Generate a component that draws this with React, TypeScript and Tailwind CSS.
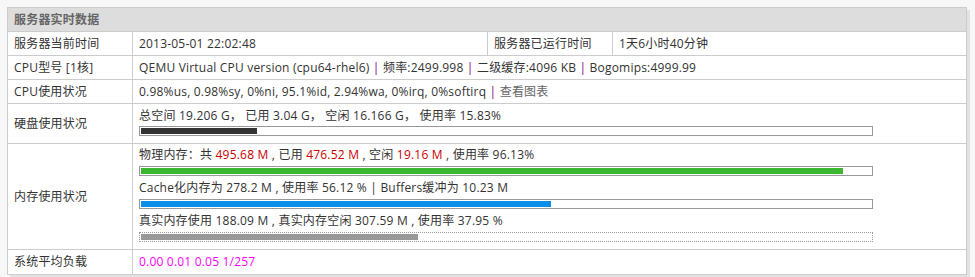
import React from "react";

const font = { fontFamily: '"Open Sans", "Noto Sans CJK SC", sans-serif' };

function Bar({ pct, color, dotted = false }: { pct: number; color: string; dotted?: boolean }) {
  return (
    <div
      className={`w-[734px] h-[10px] border border-[#999] p-[1px] bg-white ${dotted ? "border-dotted" : ""}`}
    >
      <div className={`h-full ${color}`} style={{ width: `${pct}%` }} />
    </div>
  );
}

function Row({
  label,
  className = "h-[24px]",
  children,
  last = false,
}: {
  label: string;
  className?: string;
  children: React.ReactNode;
  last?: boolean;
}) {
  return (
    <div className={`flex ${className} ${last ? "" : "border-b border-[#ccc]"}`}>
      <div className="w-[125px] shrink-0 border-r border-[#ccc] px-[6px] flex items-center">{label}</div>
      <div className="flex-1 px-[6px]">{children}</div>
    </div>
  );
}

const Sep = () => <span className="text-[#800080]">|</span>;
const Red = ({ children }: { children: React.ReactNode }) => <span className="text-[#cc0000]">{children}</span>;

export default function App() {
  return (
    <div
      className="bg-[#f7f7f7] w-[975px] h-[277px] pt-[7px] pl-[7px] text-[12px] text-[#333] tracking-[0.2px]"
      style={font}
    >
      <div className="w-[960px] bg-white border border-[#ccc] shadow-[3px_3px_0_#e2e2e2] leading-[18px]">
        <div className="h-[24px] bg-[#ddd] border-b border-[#ccc] px-[6px] flex items-center font-bold text-[#666]">
          服务器实时数据
        </div>

        {/* 时间 */}
        <div className="flex h-[24px] border-b border-[#ccc]">
          <div className="w-[125px] shrink-0 border-r border-[#ccc] px-[6px] flex items-center">服务器当前时间</div>
          <div className="w-[355px] shrink-0 border-r border-[#ccc] px-[6px] flex items-center">2013-05-01 22:02:48</div>
          <div className="w-[125px] shrink-0 border-r border-[#ccc] px-[6px] flex items-center">服务器已运行时间</div>
          <div className="flex-1 px-[6px] flex items-center">1天6小时40分钟</div>
        </div>

        <Row label="CPU型号 [1核]">
          <div className="h-full flex items-center">
            <span>
              QEMU Virtual CPU version (cpu64-rhel6) <Sep /> 频率:2499.998 <Sep /> 二级缓存:4096 KB <Sep />{" "}
              Bogomips:4999.99
            </span>
          </div>
        </Row>

        <Row label="CPU使用状况">
          <div className="h-full flex items-center">
            <span>
              0.98%us, 0.98%sy, 0%ni, 95.1%id, 2.94%wa, 0%irq, 0%softirq <Sep />{" "}
              <span className="text-[#666]">查看图表</span>
            </span>
          </div>
        </Row>

        <Row label="硬盘使用状况" className="h-[40px]">
          <div className="pt-[3px]">
            <div>总空间 19.206 G， 已用 3.04 G， 空闲 16.166 G， 使用率 15.83%</div>
            <div className="mt-[1px]">
              <Bar pct={15.83} color="bg-[#333]" />
            </div>
          </div>
        </Row>

        <Row label="内存使用状况" className="h-[106px]">
          <div className="pt-[2px] flex flex-col gap-[3px]">
            <div>
              <div>
                物理内存：共 <Red>495.68 M</Red> , 已用 <Red>476.52 M</Red> , 空闲 <Red>19.16 M</Red> , 使用率 96.13%
              </div>
              <div className="mt-[2px]">
                <Bar pct={96.13} color="bg-[#3cb531]" />
              </div>
            </div>
            <div>
              <div>Cache化内存为 278.2 M , 使用率 56.12 % | Buffers缓冲为 10.23 M</div>
              <div className="mt-[2px]">
                <Bar pct={56.12} color="bg-[#0b8fe8]" />
              </div>
            </div>
            <div>
              <div>真实内存使用 188.09 M , 真实内存空闲 307.59 M , 使用率 37.95 %</div>
              <div className="mt-[2px]">
                <Bar pct={37.95} color="bg-[#999]" dotted />
              </div>
            </div>
          </div>
        </Row>

        <Row label="系统平均负载" last>
          <div className="h-full flex items-center text-[#ff00ff]">0.00 0.01 0.05 1/257</div>
        </Row>
      </div>
    </div>
  );
}
